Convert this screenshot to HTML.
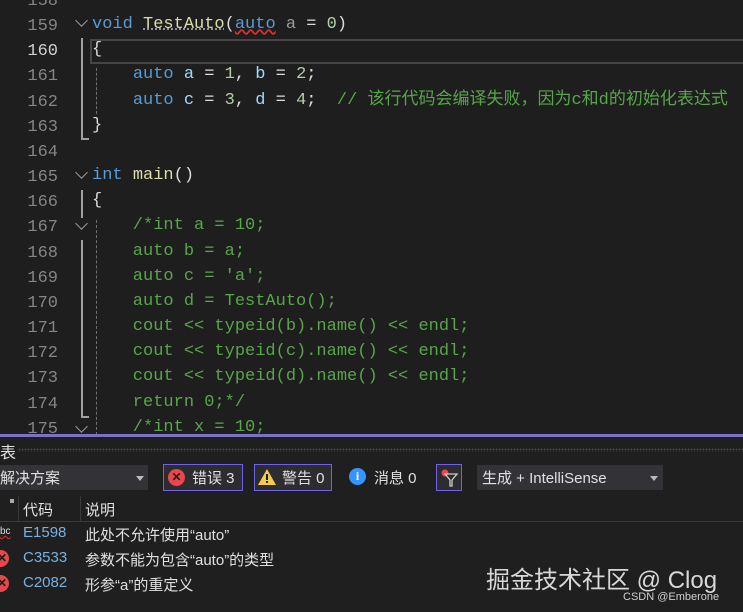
<!DOCTYPE html>
<html><head><meta charset="utf-8"><style>
*{margin:0;padding:0;box-sizing:border-box}
body{width:743px;height:612px;overflow:hidden;background:#1e1e1e;position:relative;font-family:"Liberation Mono","Noto Sans CJK SC",monospace}
.ln{position:absolute;left:0;width:58px;text-align:right;color:#858585;font-size:17px;line-height:25px;font-family:"Liberation Mono",monospace}
.c{position:absolute;left:92px;font-size:17px;line-height:25px;color:#dcdcdc;white-space:pre}
.k{color:#569cd6}.f{color:#dcdcaa}.v{color:#9cdcfe}.n{color:#b5cea8}.g{color:#57a64a}
.ui{font-family:"Liberation Sans","Noto Sans CJK SC",sans-serif;color:#e0e0e0;font-size:15px;position:absolute;white-space:nowrap}
.btn{position:absolute;top:464px;height:27px;border:1px solid #7160e8;background:#2d2d30}
.chev{position:absolute;width:9px;height:9px;border-right:1.5px solid #9a9a9a;border-bottom:1.5px solid #9a9a9a;transform:rotate(45deg)}
.x{position:absolute;width:17px;height:17px;border-radius:50%;background:#e8474c;color:#1e1e1e;font:bold 12px/17px 'Liberation Sans';text-align:center}
</style></head><body>
<div class="ln" style="top:-11px">158</div>
<div class="ln" style="top:14px">159</div>
<div class="ln" style="top:39px;color:#d0d0d0">160</div>
<div class="ln" style="top:64px">161</div>
<div class="ln" style="top:90px">162</div>
<div class="ln" style="top:115px">163</div>
<div class="ln" style="top:140px">164</div>
<div class="ln" style="top:165px">165</div>
<div class="ln" style="top:190px">166</div>
<div class="ln" style="top:215px">167</div>
<div class="ln" style="top:241px">168</div>
<div class="ln" style="top:266px">169</div>
<div class="ln" style="top:291px">170</div>
<div class="ln" style="top:316px">171</div>
<div class="ln" style="top:341px">172</div>
<div class="ln" style="top:366px">173</div>
<div class="ln" style="top:392px">174</div>
<div class="ln" style="top:417px">175</div>

<div class="chev" style="left:77px;top:16px"></div>
<div class="chev" style="left:77px;top:168px"></div>
<div class="chev" style="left:77px;top:219px"></div>
<div class="chev" style="left:77px;top:422px"></div>
<div style="position:absolute;left:81px;top:38px;width:2px;height:102px;background:#a0a0a0"></div>
<div style="position:absolute;left:81px;top:138px;width:8px;height:2px;background:#a0a0a0"></div>
<div style="position:absolute;left:81px;top:190px;width:2px;height:28px;background:#a0a0a0"></div>
<div style="position:absolute;left:81px;top:240px;width:2px;height:178px;background:#a0a0a0"></div>
<div style="position:absolute;left:81px;top:416px;width:8px;height:2px;background:#a0a0a0"></div>
<div style="position:absolute;left:96px;top:68px;height:46px;border-left:1px dashed #707070"></div>
<div style="position:absolute;left:96px;top:220px;height:220px;border-left:1px dashed #707070"></div>
<div style="position:absolute;left:90px;top:39px;width:660px;height:25px;border:2px solid #464646"></div>

<div class="c" style="top:12px"><span class="k">void</span> <span class="f" style="text-decoration:underline dotted #aaa">TestAuto</span>(<span class="k" style="text-decoration:underline wavy #e03030">auto</span> <span style="color:#9a9a9a">a</span> = <span class="n">0</span>)</div>
<div class="c" style="top:37px">{</div>
<div class="c" style="top:62px">    <span class="k">auto</span> <span class="v">a</span> = <span class="n">1</span>, <span class="v">b</span> = <span class="n">2</span>;</div>
<div class="c" style="top:88px">    <span class="k">auto</span> <span class="v">c</span> = <span class="n">3</span>, <span class="v">d</span> = <span class="n">4</span>;  <span class="g">// 该行代码会编译失败，因为c和d的初始化表达式</span></div>
<div class="c" style="top:113px">}</div>
<div class="c" style="top:163px"><span class="k">int</span> <span class="f">main</span>()</div>
<div class="c" style="top:188px">{</div>
<div class="c g" style="top:213px">    /*int a = 10;</div>
<div class="c g" style="top:239px">    auto b = a;</div>
<div class="c g" style="top:264px">    auto c = 'a';</div>
<div class="c g" style="top:289px">    auto d = TestAuto();</div>
<div class="c g" style="top:314px">    cout &lt;&lt; typeid(b).name() &lt;&lt; endl;</div>
<div class="c g" style="top:339px">    cout &lt;&lt; typeid(c).name() &lt;&lt; endl;</div>
<div class="c g" style="top:364px">    cout &lt;&lt; typeid(d).name() &lt;&lt; endl;</div>
<div class="c g" style="top:390px">    return 0;*/</div>
<div class="c g" style="top:415px">    /*int x = 10;</div>

<div style="position:absolute;left:0;top:434px;width:743px;height:178px;background:#1f1f1f"></div>
<div style="position:absolute;left:0;top:434px;width:743px;height:3px;background:#7b72c8"></div>
<div class="ui" style="left:0;top:439px;font-size:16px">表</div>
<div style="position:absolute;left:18px;top:448px;width:725px;height:4px;background-image:radial-gradient(#444 1px,transparent 1px);background-size:3px 3px"></div>

<div style="position:absolute;left:0;top:465px;width:148px;height:25px;background:#333337"></div>
<div class="ui" style="left:0;top:467px">解决方案</div>
<div style="position:absolute;left:136px;top:476px;border:4px solid transparent;border-top:5px solid #bbb"></div>

<div class="btn" style="left:163px;width:80px"></div>
<div class="x" style="left:168px;top:469px">✕</div>
<div class="ui" style="left:192px;top:467px">错误 3</div>

<div class="btn" style="left:254px;width:78px"></div>
<svg style="position:absolute;left:257px;top:468px" width="20" height="18"><polygon points="10,1 19,17 1,17" fill="#f5c94d"/><rect x="9" y="6" width="2" height="6" fill="#1e1e1e"/><rect x="9" y="13" width="2" height="2" fill="#1e1e1e"/></svg>
<div class="ui" style="left:282px;top:467px">警告 0</div>

<div style="position:absolute;left:349px;top:468px;width:17px;height:17px;border-radius:50%;background:#3794ff;color:#fff;font:bold 12px/17px 'Liberation Serif';text-align:center">i</div>
<div class="ui" style="left:374px;top:467px">消息 0</div>

<div class="btn" style="left:436px;width:26px"></div>
<svg style="position:absolute;left:440px;top:468px" width="20" height="20"><circle cx="5" cy="5" r="3.5" fill="#e8474c"/><path d="M5 6 H17 L12 12 V18 H10 V12 Z" fill="none" stroke="#ccc" stroke-width="1.3"/></svg>

<div style="position:absolute;left:477px;top:465px;width:186px;height:25px;background:#333337"></div>
<div class="ui" style="left:482px;top:467px">生成 + IntelliSense</div>
<div style="position:absolute;left:650px;top:476px;border:4px solid transparent;border-top:5px solid #bbb"></div>

<div style="position:absolute;left:0;top:521px;width:743px;height:1px;background:#3a3a3a"></div>
<div style="position:absolute;left:18px;top:496px;width:1px;height:25px;background:#3a3a3a"></div>
<div style="position:absolute;left:80px;top:496px;width:1px;height:25px;background:#3a3a3a"></div>
<div class="ui" style="left:6px;top:494px;font-size:8px;color:#aaa">▗</div>
<div class="ui" style="left:23px;top:499px">代码</div>
<div class="ui" style="left:85px;top:499px">说明</div>

<div class="ui" style="left:0;top:526px;font-size:10px;color:#ddd;text-decoration:underline wavy #e03030">bc</div>
<div class="ui" style="left:23px;top:524px;color:#7ab0e0">E1598</div>
<div class="ui" style="left:85px;top:524px">此处不允许使用“auto”</div>

<div class="x" style="left:-8px;top:550px;text-align:right;padding-right:2px">✕</div>
<div class="ui" style="left:23px;top:549px;color:#7ab0e0">C3533</div>
<div class="ui" style="left:85px;top:549px">参数不能为包含“auto”的类型</div>

<div class="x" style="left:-8px;top:575px;text-align:right;padding-right:2px">✕</div>
<div class="ui" style="left:23px;top:574px;color:#7ab0e0">C2082</div>
<div class="ui" style="left:85px;top:574px">形参“a”的重定义</div>

<div class="ui" style="left:486px;top:560px;font-size:24px;color:#d8d8d8">掘金技术社区 @ Clog</div>
<div class="ui" style="left:623px;top:591px;font-size:11px;color:#d0d0d0">CSDN @Emberone</div>
</body></html>
